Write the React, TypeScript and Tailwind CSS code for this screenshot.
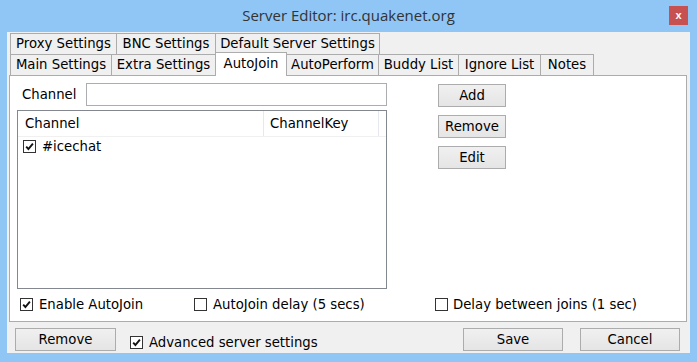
import React from "react";

const TOP_TABS: [string, number][] = [
  ["Proxy Settings", 107],
  ["BNC Settings", 100],
  ["Default Server Settings", 165],
];

const MAIN_TABS: [string, number][] = [
  ["Main Settings", 102],
  ["Extra Settings", 105],
  ["AutoJoin", 72],
  ["AutoPerform", 93],
  ["Buddy List", 81],
  ["Ignore List", 83],
  ["Notes", 54],
];

function Check({ on }: { on?: boolean }) {
  return (
    <span className="w-[13px] h-[13px] border border-[#333] bg-white flex items-center justify-center shrink-0">
      {on && (
        <svg width="11" height="11" viewBox="0 0 11 11">
          <path d="M2.2 5.6 L4.4 8 L8.9 2.6" fill="none" stroke="#111" strokeWidth="1.9" />
        </svg>
      )}
    </span>
  );
}

function Btn({ label, w }: { label: string; w: string }) {
  return (
    <button className={`${w} h-[23px] border border-[#acacac] bg-gradient-to-b from-[#f0f0f0] to-[#e5e5e5] text-black flex items-center justify-center leading-none`}>
      {label}
    </button>
  );
}

function Tab({ label, w, first, selected }: { label: string; w: number; first?: boolean; selected?: boolean }) {
  if (selected) {
    return (
      <div
        className="relative z-10 h-[24px] -mb-px -ml-px bg-white border-t border-l border-r border-[#acacac] flex items-center justify-center pb-[2px]"
        style={{ width: w }}
      >
        {label}
      </div>
    );
  }
  return (
    <div
      className={`h-[21px] bg-[#f0f0f0] border-t border-l border-r border-[#acacac] flex items-center justify-center ${first ? "" : "-ml-px"}`}
      style={{ width: w }}
    >
      {label}
    </div>
  );
}

export default function App() {
  return (
    <div className="w-[697px] h-[362px] bg-[#8fc6f6] flex flex-col font-['DejaVu_Sans',sans-serif] text-[13.25px] text-black overflow-hidden">
      {/* title bar */}
      <div className="relative h-[32px] flex items-center justify-center shrink-0">
        <span className="font-['Open_Sans',sans-serif] text-[15px] text-[#333] pb-[1px]">Server Editor: irc.quakenet.org</span>
        <div className="absolute right-[9px] top-[6px] w-[19px] h-[19px] bg-[#c75050] flex items-center justify-center text-white font-bold text-[11px] leading-none font-['Liberation_Sans',sans-serif]">
          x
        </div>
      </div>

      {/* client */}
      <div className="mx-[7px] h-[321px] bg-[#f0f0f0] flex flex-col shrink-0">
        <div className="pl-[3px] pt-[1px]">
          <div className="flex">
            {TOP_TABS.map(([l, w], i) => (
              <Tab key={l} label={l} w={w} first={i === 0} />
            ))}
          </div>
          <div className="flex items-end h-[21px]">
            {MAIN_TABS.map(([l, w], i) => (
              <Tab key={l} label={l} w={w} first={i === 0} selected={l === "AutoJoin"} />
            ))}
          </div>
        </div>

        {/* panel */}
        <div className="ml-[2px] w-[678px] h-[247px] border border-[#acacac] bg-white flex flex-col">
          <div className="flex pl-[7px] pt-[7px]">
            <div className="w-[370px] flex flex-col">
              <div className="h-[23px] flex items-center">
                <span className="ml-[5px]">Channel</span>
                <div className="ml-auto w-[301px] h-[23px] border border-[#abadb3] bg-white" />
              </div>
              <div className="mt-[4px] h-[179px] border border-[#828790] bg-white flex flex-col">
                <div className="h-[26px] flex border-b border-[#f0f0f0]">
                  <div className="w-[246px] pl-[7px] flex items-center border-r border-[#e5e9ef]">Channel</div>
                  <div className="w-[115px] pl-[6px] flex items-center border-r border-[#e5e9ef]">ChannelKey</div>
                </div>
                <div className="h-[19px] flex items-center pl-[5px]">
                  <Check on />
                  <span className="ml-[6px]">#icechat</span>
                </div>
              </div>
            </div>
            <div className="ml-[51px] pt-[1px] flex flex-col gap-[8px]">
              <Btn label="Add" w="w-[68px]" />
              <Btn label="Remove" w="w-[68px]" />
              <Btn label="Edit" w="w-[68px]" />
            </div>
          </div>
          <div className="flex items-center pl-[10px] mt-[9px] h-[13px]">
            <div className="w-[174px] flex items-center">
              <Check on />
              <span className="ml-[6px]">Enable AutoJoin</span>
            </div>
            <div className="w-[241px] flex items-center">
              <Check />
              <span className="ml-[6px]">AutoJoin delay (5 secs)</span>
            </div>
            <div className="flex items-center">
              <Check />
              <span className="ml-[5px]">Delay between joins (1 sec)</span>
            </div>
          </div>
        </div>

        {/* bottom bar */}
        <div className="flex items-start pl-[8px] pr-[10px] pt-[6px]">
          <Btn label="Remove" w="w-[101px]" />
          <div className="ml-[14px] mt-[8px] h-[13px] flex items-center">
            <Check on />
            <span className="ml-[6px]">Advanced server settings</span>
          </div>
          <div className="ml-auto flex gap-[17px]">
            <Btn label="Save" w="w-[100px]" />
            <Btn label="Cancel" w="w-[100px]" />
          </div>
        </div>
      </div>
    </div>
  );
}
